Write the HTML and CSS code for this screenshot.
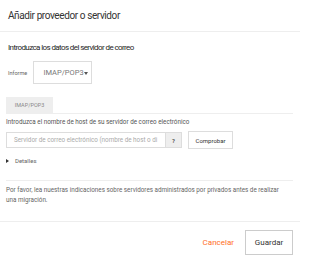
FILE: index.html
```html
<!DOCTYPE html>
<html lang="es">
<head>
<meta charset="utf-8">
<link rel="stylesheet" href="styles.css">
</head>
<body>
<div class="dialog">
  <header class="dlg-head">Añadir proveedor o servidor</header>
  <main class="dlg-body">
    <h2 class="section-title">Introduzca los datos del servidor de correo</h2>
    <div class="field-row">
      <span class="field-label">Informe</span>
      <div class="select">IMAP/POP3<span class="caret"></span></div>
    </div>
    <div class="tabs">
      <div class="tab">IMAP/POP3</div>
    </div>
    <p class="hint">Introduzca el nombre de host de su servidor de correo electrónico</p>
    <div class="host-row">
      <div class="input-group">
        <div class="input">Servidor de correo electrónico (nombre de host o di</div>
        <div class="help-btn">?</div>
      </div>
      <div class="btn-check">Comprobar</div>
    </div>
    <div class="details"><span class="tri"></span>Detalles</div>
    <p class="note">Por favor, lea nuestras indicaciones sobre servidores administrados por privados antes de realizar una migración.</p>
  </main>
  <footer class="dlg-foot">
    <span class="cancel">Cancelar</span>
    <span class="save">Guardar</span>
  </footer>
</div>
</body>
</html>
```
FILE: styles.css
```css
* { box-sizing: border-box; }
html, body { margin: 0; padding: 0; background: #fff; }
body { width: 300px; height: 258px; overflow: hidden; font-family: Roboto, "Liberation Sans", sans-serif; color: #333; }
.dialog { display: flex; flex-direction: column; height: 258px; }
.dlg-head { height: 32px; padding: 6px 8px 0; font-size: 10px; line-height: 20px; letter-spacing: -0.4px; color: #333; border-bottom: 1px solid #eee; }
.dlg-body { padding: 0 7px 0 6px; border-bottom: 1px solid #eee; }
.section-title { margin: 10px 0 0 2px; font-size: 8px; font-weight: 400; color: #1e1e1e; line-height: 12px; letter-spacing: -0.6px; }
.field-row { display: flex; align-items: center; margin-top: 7px; margin-left: 2px; }
.field-label { font-size: 5.5px; color: #666; width: 25px; }
.select { width: 59px; height: 23px; border: 1px solid #ddd; display: flex; align-items: center; justify-content: center; font-size: 7.5px; color: #777; padding-left: 6px; }
.caret { display: inline-block; width: 0; height: 0; border-left: 2px solid transparent; border-right: 2px solid transparent; border-top: 3px solid #555; margin-left: 0; margin-top: 2px; }
.tabs { margin-top: 13px; border-bottom: 1px solid #eee; display: flex; }
.tab { width: 47px; height: 16px; background: #eee; font-size: 5.5px; color: #888; display: flex; align-items: center; justify-content: center; }
.hint { margin: 4px 0 0; font-size: 6.3px; color: #555; line-height: 8px; }
.host-row { display: flex; align-items: center; margin-top: 5px; }
.input-group { display: flex; height: 16px; }
.input { width: 159px; height: 16px; border: 1px solid #ddd; border-right: none; font-size: 6.3px; color: #aaa; line-height: 14px; padding-left: 7px; white-space: nowrap; overflow: hidden; }
.help-btn { width: 17px; height: 16px; background: #eee; border: 1px solid #ddd; font-size: 6px; font-weight: 700; color: #555; display: flex; align-items: center; justify-content: center; }
.btn-check { margin-left: 6px; width: 45px; height: 18px; border: 1px solid #ddd; font-size: 6px; color: #333; display: flex; align-items: center; justify-content: center; }
.details { margin-top: 6px; font-size: 6px; color: #666; display: flex; align-items: center; height: 11px; }
.tri { width: 0; height: 0; border-top: 2.5px solid transparent; border-bottom: 2.5px solid transparent; border-left: 3px solid #333; margin-right: 6px; }
.note { margin: 14px 0 0; padding: 4px 6px 16px 0; border-top: 1px solid #eee; font-size: 6.3px; color: #666; line-height: 10px; }
.dlg-foot { flex: 1; display: flex; align-items: flex-start; justify-content: flex-end; padding: 8px 7px 0 0; }
.cancel { color: #ff6e1f; font-size: 8px; margin-right: 11px; line-height: 25px; }
.save { width: 48px; height: 25px; border: 1px solid #ccc; font-size: 8px; color: #333; display: flex; align-items: center; justify-content: center; }
```
